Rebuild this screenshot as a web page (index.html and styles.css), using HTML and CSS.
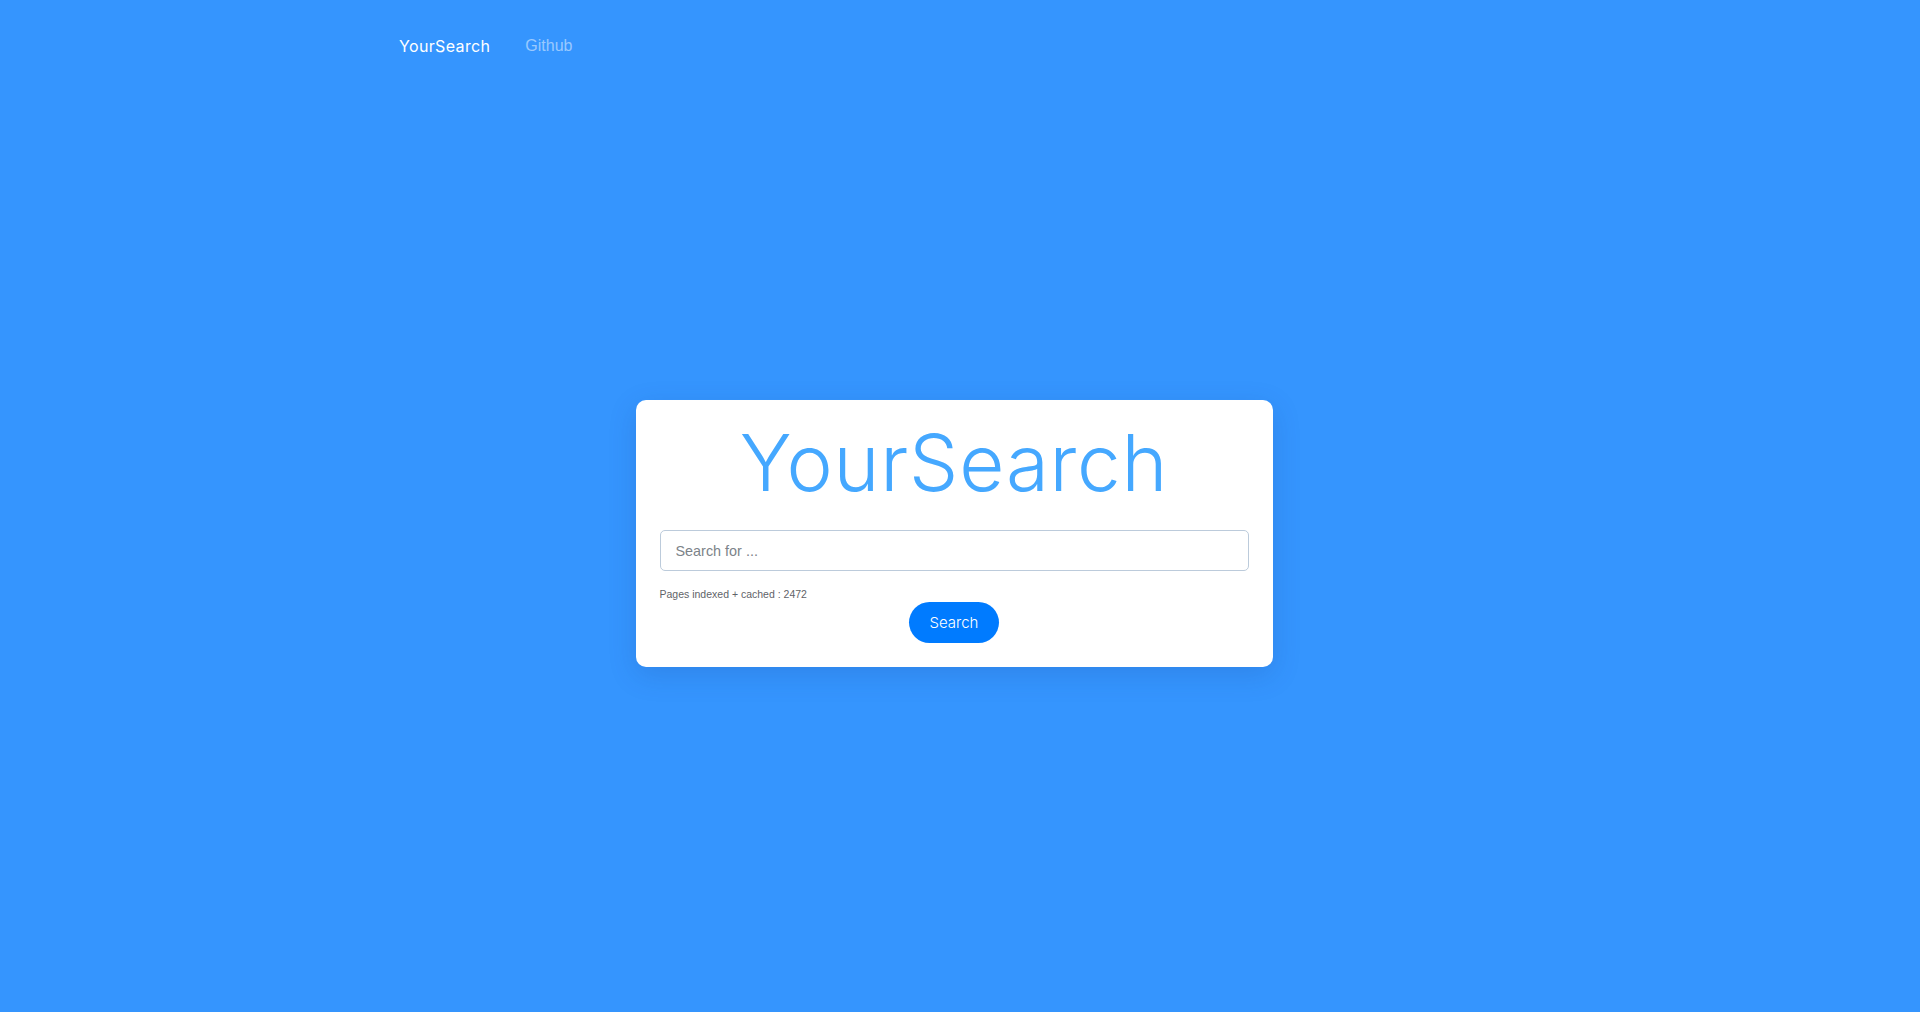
FILE: index.html
```html
<!DOCTYPE html>
<html lang="en">
<head>
<meta charset="utf-8">
<title>YourSearch</title>
<link rel="stylesheet" href="styles.css">
</head>
<body>
<div class="page">
  <nav class="navbar">
    <a class="brand" href="#">YourSearch</a>
    <a class="nav-link" href="#">Github</a>
  </nav>
  <main class="main">
    <div class="card">
      <h1 class="title">YourSearch</h1>
      <input class="search-input" type="text" placeholder="Search for ...">
      <p class="stats">Pages indexed + cached : 2472</p>
      <div class="actions">
        <button class="btn" type="button">Search</button>
      </div>
    </div>
  </main>
</div>
</body>
</html>
```

FILE: styles.css
```css
html, body {
  margin: 0;
  padding: 0;
}
body {
  background: #3595fe;
  font-family: "Liberation Sans", Arial, sans-serif;
  min-height: 1012px;
}
.page {
  width: 1140px;
  margin: 0 auto;
  padding-right: 12px;
}
.navbar {
  display: flex;
  align-items: center;
  height: 92px;
  padding-left: 15px;
}
.brand {
  font-family: "Inter", "Noto Sans", sans-serif;
  font-weight: 400;
  font-size: 16px;
  letter-spacing: 0.35px;
  color: #ffffff;
  text-decoration: none;
  margin-right: 35px;
}
.nav-link {
  font-family: "Liberation Sans", Arial, sans-serif;
  font-size: 16px;
  color: rgba(255, 255, 255, 0.5);
  text-decoration: none;
  margin-top: 0;
}
.main {
  display: flex;
  justify-content: center;
  padding-top: 308px;
}
.card {
  width: 589px;
  background: #ffffff;
  border-radius: 10px;
  padding: 24px;
  box-shadow: 0 8px 28px rgba(20, 60, 140, 0.18);
  display: flex;
  flex-direction: column;
}
.title {
  margin: 0 0 28px;
  text-align: center;
  font-family: "Inter", "Noto Sans", sans-serif;
  font-weight: 300;
  font-size: 78px;
  line-height: 78px;
  letter-spacing: 0.8px;
  color: #45a8ff;
}
.search-input {
  box-sizing: border-box;
  width: 100%;
  height: 41px;
  border: 1px solid #bccbdb;
  border-radius: 5px;
  padding: 0 15px;
  font-family: "Liberation Sans", Arial, sans-serif;
  font-size: 14.4px;
  color: #495057;
  outline: none;
}
.search-input::placeholder {
  color: #7c8389;
}
.stats {
  margin: 16px 0 0;
  font-size: 10.5px;
  line-height: 14px;
  color: #5f6368;
}
.actions {
  display: flex;
  justify-content: center;
  margin-top: 1px;
}
.btn {
  width: 90px;
  height: 41px;
  border: none;
  border-radius: 21px;
  background: #007bff;
  color: #ffffff;
  font-family: "Inter", "Noto Sans", sans-serif;
  font-weight: 300;
  font-size: 15px;
  cursor: pointer;
}
```
